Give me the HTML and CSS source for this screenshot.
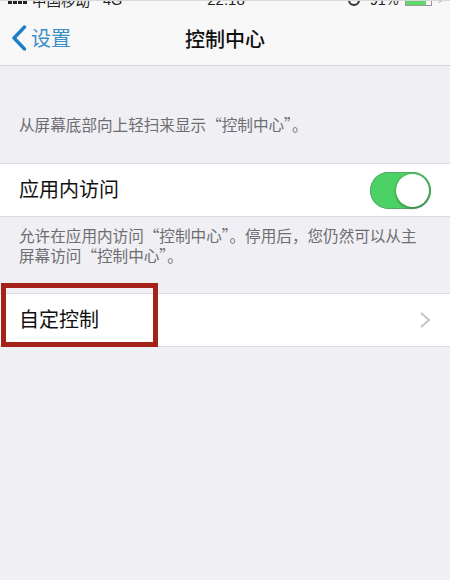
FILE: index.html
```html
<!DOCTYPE html>
<html lang="zh">
<head>
<meta charset="utf-8">
<title>控制中心</title>
<link rel="stylesheet" href="styles.css">
</head>
<body>
<div class="screen">
  <header class="nav">
    <div class="status">
      <div class="status-left">
        <span class="signal"><i></i><i></i><i></i><i></i></span>
        <span>中国移动</span><span class="net">4G</span>
      </div>
      <div class="status-time">22:18</div>
      <div class="status-right">
        <span class="alarm"></span>
        <span>91%</span>
        <span class="battery"><span class="battery-fill"></span></span>
        <span class="bolt">⚡</span>
      </div>
    </div>
    <div class="nav-bar">
      <a class="back">
        <svg class="back-icon" width="16" height="26" viewBox="0 0 16 26"><path d="M13.5 2 L3 13 L13.5 24" fill="none" stroke="#1f7fc4" stroke-width="3.4" stroke-linecap="round" stroke-linejoin="round"/></svg>
        <span>设置</span>
      </a>
      <h1 class="title">控制中心</h1>
    </div>
  </header>

  <p class="note note-top">从屏幕底部向上轻扫来显示“控制中心”。</p>

  <div class="row">
    <span class="row-label">应用内访问</span>
    <span class="switch"><span class="knob"></span></span>
  </div>

  <p class="note note-mid">允许在应用内访问“控制中心”。停用后，您仍然可以从主屏幕访问“控制中心”。</p>

  <div class="row row-custom">
    <span class="row-label">自定控制</span>
    <svg class="chevron" width="12" height="18" viewBox="0 0 12 18"><path d="M2 2 L10 9 L2 16" fill="none" stroke="#c4c4c8" stroke-width="2"/></svg>
    <div class="highlight"></div>
  </div>
</div>
</body>
</html>
```
FILE: styles.css
```css
* { box-sizing: border-box; }
html, body { margin: 0; padding: 0; }
body {
  width: 450px;
  height: 580px;
  overflow: hidden;
  background: #efeff4;
  font-family: "Noto Sans CJK SC", "Liberation Sans", sans-serif;
}
.screen {
  height: 580px;
  background: #efeff4;
  overflow: hidden;
}
.nav {
  height: 66px;
  background: #f8f8f8;
  border-bottom: 1px solid #d4d4d6;
  border-top: 1px solid #d8d8d8;
  overflow: hidden;
}
.status {
  height: 16px;
  margin-top: -9px;
  display: flex;
  align-items: center;
  justify-content: space-between;
  padding: 0 6px 0 8px;
  font-size: 14.5px;
  line-height: 16px;
  color: #222;
}
.status-left, .status-right {
  display: flex;
  align-items: center;
  gap: 5px;
  width: 130px;
}
.status-right { justify-content: flex-end; gap: 6px; }
.net { margin-left: 8px; font-family: "Liberation Sans", sans-serif; }
.status-time { font-family: "Liberation Sans", sans-serif; font-size: 15px; }
.status-right span:nth-child(2) { font-family: "Liberation Sans", sans-serif; }
.signal { display: flex; gap: 1px; }
.signal i { width: 4px; height: 8px; background: #222; }
.battery {
  width: 27px;
  height: 11px;
  border: 1px solid #999;
  display: block;
}
.battery-fill { display: block; width: 80%; height: 100%; background: #5fd870; }
.alarm {
  width: 12px;
  height: 12px;
  border: 2px solid #333;
  border-radius: 50%;
  margin-right: 4px;
}
.bolt { font-size: 9px; font-family: "DejaVu Sans", sans-serif; }
.nav-bar {
  position: relative;
  height: 48px;
  margin-top: 7px;
  display: flex;
  align-items: center;
  justify-content: center;
}
.back {
  position: absolute;
  left: 11px;
  top: 9px;
  display: flex;
  align-items: center;
  gap: 4px;
  font-size: 20px;
  line-height: 28px;
  color: #3a8fc8;
}
.title {
  margin: 0;
  font-size: 20px;
  line-height: 28px;
  font-weight: 500;
  color: #111;
}
.note {
  margin: 0;
  padding: 0 26px 0 19px;
  font-size: 15.6px;
  line-height: 20px;
  color: #6d6d72;
}
.note-top { padding-top: 48px; height: 97px; }
.note-mid { padding-top: 8px; height: 76px; }
.row {
  position: relative;
  height: 54px;
  background: #fff;
  border-top: 1px solid #dcdce0;
  border-bottom: 1px solid #dcdce0;
  display: flex;
  align-items: center;
  justify-content: space-between;
  padding: 0 19px;
}
.row-label {
  font-size: 20px;
  line-height: 28px;
  color: #111;
  margin-bottom: 2px;
}
.switch {
  width: 61px;
  height: 37px;
  border-radius: 19px;
  background: #4cd264;
  display: flex;
  justify-content: flex-end;
  padding: 2px 2px 2px 0;
  box-shadow: inset 0 0 0 1px #55a86a;
}
.knob {
  width: 33px;
  height: 33px;
  border-radius: 50%;
  background: #fff;
  box-shadow: 0 1px 3px rgba(0,0,0,.45);
}
.chevron { margin-right: 0; }
.highlight {
  position: absolute;
  left: 1px;
  top: -11px;
  width: 157px;
  height: 64px;
  border: 5px solid #a5221a;
}
```
